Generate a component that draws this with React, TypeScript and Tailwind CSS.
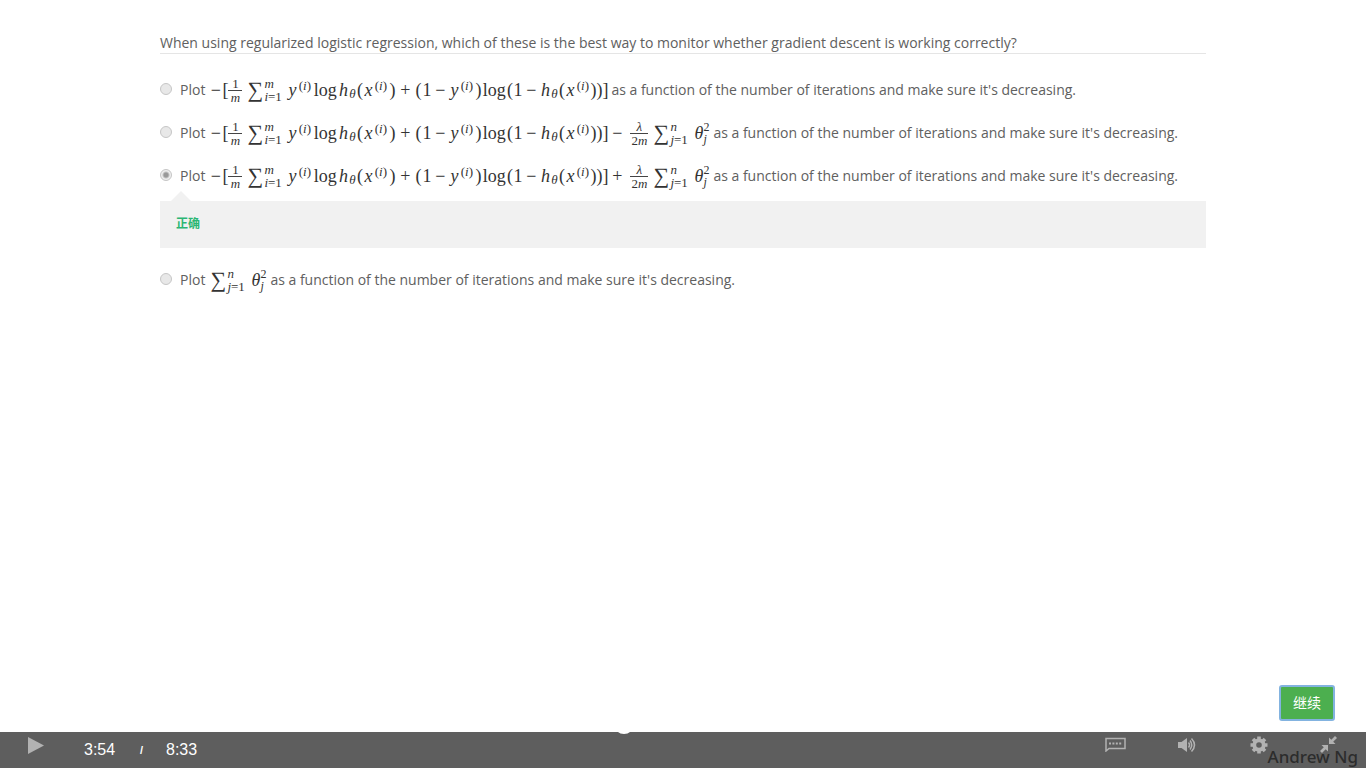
import type { ReactNode } from 'react';
import { useState } from 'react';

type CellProps = { w: string; children: ReactNode; italic?: boolean };

function Cell({ w, children, italic }: CellProps) {
  return <span className={`inline-flex shrink-0 justify-center ${w} ${italic ? 'italic' : ''}`}>{children}</span>;
}

function Sup() {
  return (
    <span className="inline-flex w-[15px] shrink-0 justify-center pb-2 text-[13px] leading-4">
      (<i>i</i>)
    </span>
  );
}

function Sub() {
  return <span className="inline-flex w-2 shrink-0 justify-center pt-2 text-[13px] leading-4 italic">θ</span>;
}

function Fraction({ top, bottom, w }: { top: ReactNode; bottom: ReactNode; w: string }) {
  return (
    <span className={`inline-flex shrink-0 flex-col items-center pt-px text-[13px] leading-3 ${w}`}>
      <span className="w-full border-b border-[#444] text-center">{top}</span>
      <span className="pt-px">{bottom}</span>
    </span>
  );
}

function Sum({ upper, index }: { upper: string; index: string }) {
  return (
    <>
      <span className="inline-flex h-6 w-[18px] shrink-0 items-center justify-center pb-px text-[22px] leading-6">∑</span>
      <span className="inline-flex w-[23px] shrink-0 flex-col text-[13px] leading-[13px]">
        <i>{upper}</i>
        <span><i>{index}</i>=1</span>
      </span>
    </>
  );
}

function ThetaSquared() {
  return (
    <span className="inline-flex items-center pl-px">
      <Cell w="w-[9px]" italic>θ</Cell>
      <span className="inline-flex w-[7px] flex-col text-xs leading-3">
        <span>2</span>
        <i>j</i>
      </span>
    </span>
  );
}

function HypothesisOfX() {
  return (
    <>
      <Cell w="w-[10px]" italic>h</Cell>
      <Sub />
      <Cell w="w-[7px]">(</Cell>
      <Cell w="w-[10px]" italic>x</Cell>
      <Sup />
    </>
  );
}

function Math({ children }: { children: ReactNode }) {
  return (
    <span className="inline-flex h-7 shrink-0 items-center font-['Liberation_Serif',serif] text-[18px] leading-6 text-[#333]">
      {children}
    </span>
  );
}

function Cost() {
  return (
    <>
      <Cell w="w-[13px]">−</Cell>
      <Cell w="w-[6px]">[</Cell>
      <Fraction w="w-[14px] mr-1" top="1" bottom={<i>m</i>} />
      <Sum upper="m" index="i" />
      <Cell w="w-[10px]" italic>y</Cell>
      <Sup />
      <Cell w="w-[26px]">log</Cell>
      <HypothesisOfX />
      <Cell w="w-2">)</Cell>
      <Cell w="w-[18px]">+</Cell>
      <Cell w="w-2">(</Cell>
      <Cell w="w-[9px]">1</Cell>
      <Cell w="w-[18px]">−</Cell>
      <Cell w="w-[10px]" italic>y</Cell>
      <Sup />
      <Cell w="w-2">)</Cell>
      <Cell w="w-[24px]">log</Cell>
      <Cell w="w-[7px]">(</Cell>
      <Cell w="w-[9px]">1</Cell>
      <Cell w="w-[18px]">−</Cell>
      <HypothesisOfX />
      <Cell w="w-[6px]">)</Cell>
      <Cell w="w-[6px]">)</Cell>
      <Cell w="w-[6px]">]</Cell>
    </>
  );
}

function Regularized({ sign }: { sign: string }) {
  return (
    <Math>
      <Cost />
      <Cell w="w-[18px] mr-1">{sign}</Cell>
      <Fraction w="w-[18px] mr-1" top={<i>λ</i>} bottom={<>2<i>m</i></>} />
      <Sum upper="n" index="j" />
      <ThetaSquared />
    </Math>
  );
}

type OptionProps = { id: string; picked: string; onPick: (id: string) => void; children: ReactNode };

function Option({ id, picked, onPick, children }: OptionProps) {
  return (
    <label className="flex h-7 items-center whitespace-nowrap">
      <input
        type="radio"
        name="answer"
        checked={picked === id}
        onChange={() => onPick(id)}
        className="mr-2 mb-[2px] size-3 shrink-0 appearance-none rounded-full border border-[#c6c6c6] bg-[#e8e8e8] checked:bg-[radial-gradient(circle,#999_0_2px,#eee_4px)]"
      />
      <span className="mr-1">Plot</span>
      {children}
      <span className="ml-[3px]">as a function of the number of iterations and make sure it's decreasing.</span>
    </label>
  );
}

export default function App() {
  const [picked, setPicked] = useState('plus');
  return (
    <div className="flex min-h-screen flex-col bg-white font-['Open_Sans','Noto_Sans_CJK_SC',sans-serif] text-sm text-[#606060]">
      <main className="flex flex-1 flex-col px-40 pt-[33px]">
        <h1 className="border-b border-[#e5e5e5] leading-5">
          When using regularized logistic regression, which of these is the best way to monitor whether gradient descent is working correctly?
        </h1>
        <form className="flex flex-col pt-[22px]">
          <div className="flex flex-col gap-[15px]">
            <Option id="plain" picked={picked} onPick={setPicked}><Math><Cost /></Math></Option>
            <Option id="minus" picked={picked} onPick={setPicked}><Regularized sign="−" /></Option>
            <Option id="plus" picked={picked} onPick={setPicked}><Regularized sign="+" /></Option>
          </div>
          <div className="pt-px pb-[18px]">
            <svg className="ml-[11px] block h-[10px] w-5" viewBox="0 0 20 10" aria-hidden="true">
              <path d="M0 10 10 0 20 10Z" fill="#f1f1f1" />
            </svg>
            <p className="bg-[#f1f1f1] px-4 pt-3 pb-[14px] text-xs leading-[21px] font-bold text-[#2bb673]">正确</p>
          </div>
          <Option id="theta" picked={picked} onPick={setPicked}>
            <Math><Sum upper="n" index="j" /><ThetaSquared /></Math>
          </Option>
        </form>
      </main>
      <div className="flex justify-end pr-8 pb-3">
        <button type="button" className="h-[34px] rounded-[2px] bg-[#4caf4f] px-[13px] text-sm text-white outline-2 -outline-offset-1 outline-[#83b3e0]">继续</button>
      </div>
      <footer className="relative flex h-9 items-center bg-[#5e5e5e] font-['Liberation_Sans',sans-serif] text-base text-white">
        <svg className="absolute top-0 left-[618px] h-[2px] w-3" viewBox="0 0 12 2" aria-hidden="true">
          <path d="M0 0H12Q10 2 6 2T0 0Z" fill="#fff" />
        </svg>
        <button type="button" aria-label="Play" className="mb-[10px] ml-7 text-[#b2b2b2]">
          <svg className="block h-[17px] w-4" viewBox="0 0 16 17"><path d="M0 0 16 8.5 0 17Z" fill="currentColor" /></svg>
        </button>
        <span className="ml-10 w-14">3:54</span>
        <span className="w-[26px] text-[11px] font-bold">/</span>
        <span>8:33</span>
        <span className="absolute right-2 bottom-0 font-['Noto_Sans',sans-serif] text-[17px] leading-[22px] font-medium text-[#2c2c2c]">Andrew Ng</span>
        <div className="relative ml-auto flex items-center gap-[52px] pr-[29px] pb-[11px] text-[#b2b2b2]">
          <button type="button" aria-label="Subtitles">
            <svg className="block h-[15px] w-[21px]" viewBox="0 0 21 15" fill="none" stroke="currentColor" strokeWidth="1.5">
              <path d="M1 14V1.5H20V11.5H4Z" /><path d="M4 6.5H17" strokeWidth="2" strokeDasharray="2 1.4" />
            </svg>
          </button>
          <button type="button" aria-label="Volume">
            <svg className="block h-4 w-5" viewBox="0 0 20 16" fill="none" stroke="currentColor" strokeWidth="1.5">
              <path d="M0 5H3.5L9 1V15L3.5 11H0Z" fill="currentColor" stroke="none" />
              <path d="M10.5 5.5Q12.5 8 10.5 10.5M12 3.5Q15.5 8 12 12.5M13.5 1.5Q19.5 8 13.5 14.5" />
            </svg>
          </button>
          <button type="button" aria-label="Settings">
            <svg className="block size-[18px]" viewBox="0 0 18 18" fill="none" stroke="currentColor">
              <circle cx="9" cy="9" r="4.7" strokeWidth="3.8" />
              <path d="M9 .5V4M9 14V17.5M.5 9H4M14 9H17.5M3 3 5.5 5.5M12.5 12.5 15 15M3 15 5.5 12.5M12.5 5.5 15 3" strokeWidth="3.6" />
            </svg>
          </button>
          <button type="button" aria-label="Exit full screen">
            <svg className="block size-[17px]" viewBox="0 0 17 17" fill="currentColor">
              <path d="M9 8V1.5L11.3 3.8 15 0 17 2 13.2 5.7 15.5 8ZM8 9V15.5L5.7 13.2 2 17 0 15 3.8 11.3 1.5 9Z" />
            </svg>
          </button>
        </div>
      </footer>
    </div>
  );
}
